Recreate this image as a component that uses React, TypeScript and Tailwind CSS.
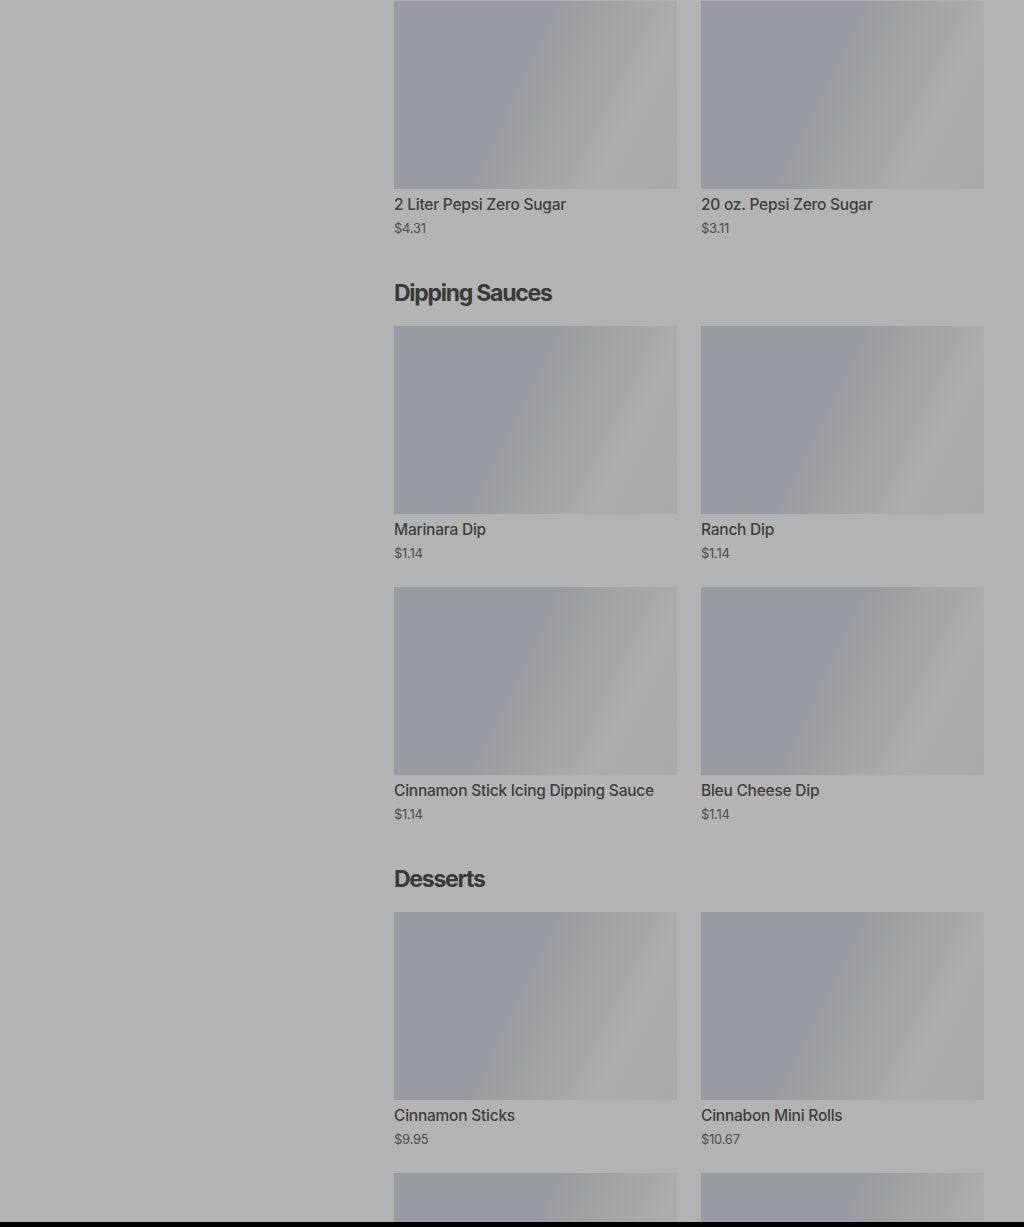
import React from 'react';

type Item = { name: string; price: string };

const sections: { title?: string; items: Item[] }[] = [
  {
    items: [
      { name: '2 Liter Pepsi Zero Sugar', price: '$4.31' },
      { name: '20 oz. Pepsi Zero Sugar', price: '$3.11' },
    ],
  },
  {
    title: 'Dipping Sauces',
    items: [
      { name: 'Marinara Dip', price: '$1.14' },
      { name: 'Ranch Dip', price: '$1.14' },
      { name: 'Cinnamon Stick Icing Dipping Sauce', price: '$1.14' },
      { name: 'Bleu Cheese Dip', price: '$1.14' },
    ],
  },
  {
    title: 'Desserts',
    items: [
      { name: 'Cinnamon Sticks', price: '$9.95' },
      { name: 'Cinnabon Mini Rolls', price: '$10.67' },
      // next row is cut off by the viewport, only the images show
      { name: '', price: '' },
      { name: '', price: '' },
    ],
  },
];

function MenuCard({ item }: { item: Item }) {
  return (
    <div className="flex flex-col">
      {/* image placeholder while loading */}
      <div className="h-[188px] w-full bg-[linear-gradient(116deg,#989ba2_0%,#989ba2_44%,#a0a0a0_54%,#acacac_78%,#a9a9a9_100%)]" />
      {item.name && (
        <div className="pt-[5px]">
          <div className="text-[15.5px] leading-[22px] font-medium tracking-[-0.015em] text-[#3e3e3e] truncate">
            {item.name}
          </div>
          <div className="mt-[3px] text-[13px] leading-[19px] tracking-[-0.02em] text-[#4d4d4d]">{item.price}</div>
        </div>
      )}
    </div>
  );
}

export default function App() {
  return (
    <div
      className="relative h-[1227px] overflow-hidden bg-[#b3b3b3]"
      style={{ fontFamily: 'Inter, "Noto Sans", sans-serif' }}
    >
      <div className="flex">
        {/* sidebar column (empty under overlay) */}
        <div className="w-[394px] shrink-0" />
        <div className="w-[590px] pt-px">
          {sections.map((section, i) => (
            <div key={i} className={section.title ? 'pt-[39px]' : ''}>
              {section.title && (
                <h2 className="mb-[17px] text-[23px] leading-8 font-bold tracking-[-0.055em] text-[#3a3a3a]">
                  {section.title}
                </h2>
              )}
              <div className="grid grid-cols-2 gap-x-6 gap-y-6">
                {section.items.map((item, j) => (
                  <MenuCard key={j} item={item} />
                ))}
              </div>
            </div>
          ))}
        </div>
      </div>
      <div className="absolute bottom-0 left-0 right-0 h-[5px] bg-black" />
    </div>
  );
}
